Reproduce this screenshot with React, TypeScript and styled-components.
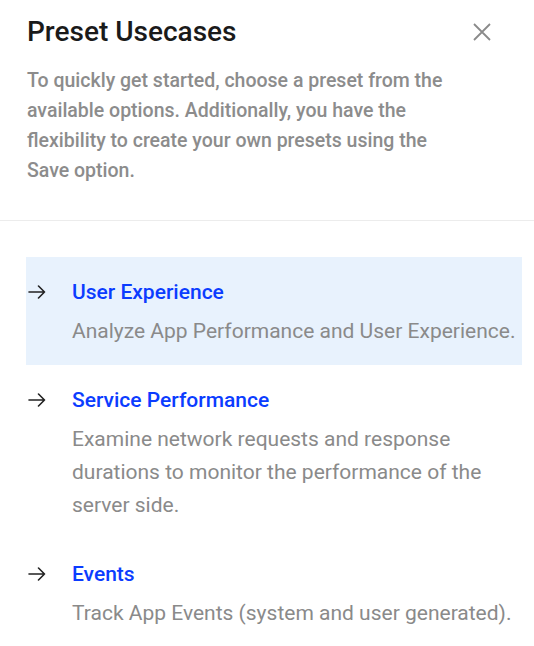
import React from "react";
import styled, { createGlobalStyle } from "styled-components";

const GlobalStyle = createGlobalStyle`
  html, body {
    margin: 0;
    padding: 0;
    background: #ffffff;
  }
  body {
    font-family: Roboto, "Noto Sans", Arial, sans-serif;
    -webkit-font-smoothing: antialiased;
  }
`;

const Panel = styled.div`
  width: 534px;
  min-height: 646px;
  background: #ffffff;
  box-sizing: border-box;
`;

const Header = styled.div`
  padding: 14px 0 0 27px;
`;

const TitleRow = styled.div`
  display: flex;
  align-items: center;
  justify-content: space-between;
  padding-right: 40px;
`;

const Title = styled.h2`
  margin: 0;
  font-size: 28px;
  line-height: 36px;
  font-weight: 500;
  color: #1a1a1a;
`;

const CloseButton = styled.button`
  display: flex;
  align-items: center;
  justify-content: center;
  width: 24px;
  height: 24px;
  padding: 0;
  border: 0;
  background: transparent;
  cursor: pointer;
`;

const Intro = styled.p`
  margin: 16px 0 0;
  max-width: 430px;
  font-size: 19.5px;
  line-height: 30px;
  font-weight: 500;
  color: #8c8c8c;
`;

const Divider = styled.hr`
  margin: 34px 0 0;
  border: 0;
  border-top: 1px solid #ececec;
`;

const List = styled.ul`
  list-style: none;
  margin: 36px 12px 0 26px;
  padding: 0;
`;

const Item = styled.li<{ $active?: boolean }>`
  display: grid;
  grid-template-columns: 44px 1fr;
  padding: 21px 6px 17px 2px;
  background: ${(p) => (p.$active ? "#e8f2fd" : "transparent")};
  cursor: pointer;
`;

const ArrowCell = styled.div`
  height: 28px;
  display: flex;
  align-items: center;
  color: #222222;
`;

const ItemTitle = styled.div`
  font-size: 21px;
  line-height: 28px;
  font-weight: 500;
  color: #0b3cff;
`;

const ItemText = styled.div`
  margin-top: 9px;
  font-size: 21px;
  line-height: 33px;
  color: #8a8a8a;
`;

const ArrowIcon = () => (
  <svg width="18" height="14" viewBox="0 0 18 14" fill="none">
    <path
      d="M1 7h15.5M10.5 1l6 6-6 6"
      stroke="currentColor"
      strokeWidth="1.6"
      strokeLinecap="round"
      strokeLinejoin="round"
    />
  </svg>
);

const CloseIcon = () => (
  <svg width="18" height="18" viewBox="0 0 18 18" fill="none">
    <path d="M1 1l16 16M17 1L1 17" stroke="#8a8a8a" strokeWidth="1.8" />
  </svg>
);

const presets = [
  {
    title: "User Experience",
    text: "Analyze App Performance and User Experience.",
    active: true,
  },
  {
    title: "Service Performance",
    text: "Examine network requests and response durations to monitor the performance of the server side.",
  },
  {
    title: "Events",
    text: "Track App Events (system and user generated).",
  },
];

export default function App() {
  return (
    <>
      <GlobalStyle />
      <Panel>
        <Header>
          <TitleRow>
            <Title>Preset Usecases</Title>
            <CloseButton aria-label="Close">
              <CloseIcon />
            </CloseButton>
          </TitleRow>
          <Intro>
            To quickly get started, choose a preset from the available options.
            Additionally, you have the flexibility to create your own presets
            using the Save option.
          </Intro>
        </Header>
        <Divider />
        <List>
          {presets.map((p) => (
            <Item key={p.title} $active={p.active}>
              <ArrowCell>
                <ArrowIcon />
              </ArrowCell>
              <div>
                <ItemTitle>{p.title}</ItemTitle>
                <ItemText>{p.text}</ItemText>
              </div>
            </Item>
          ))}
        </List>
      </Panel>
    </>
  );
}
